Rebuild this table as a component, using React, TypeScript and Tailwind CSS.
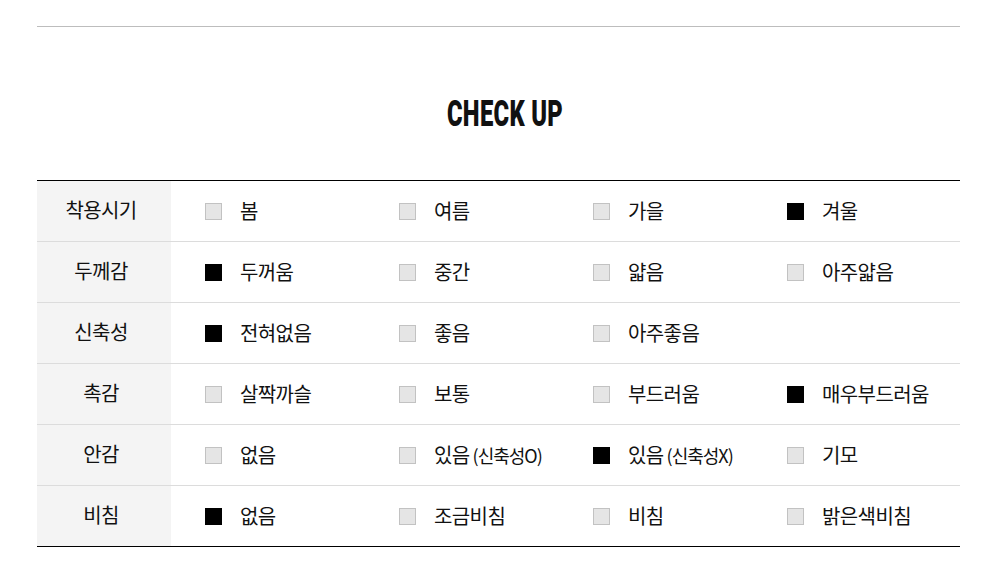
import React from "react";

type Opt = { label: string; sub?: string; on?: boolean };
const rows: { title: string; opts: Opt[] }[] = [
  { title: "착용시기", opts: [{ label: "봄" }, { label: "여름" }, { label: "가을" }, { label: "겨울", on: true }] },
  { title: "두께감", opts: [{ label: "두꺼움", on: true }, { label: "중간" }, { label: "얇음" }, { label: "아주얇음" }] },
  { title: "신축성", opts: [{ label: "전혀없음", on: true }, { label: "좋음" }, { label: "아주좋음" }] },
  { title: "촉감", opts: [{ label: "살짝까슬" }, { label: "보통" }, { label: "부드러움" }, { label: "매우부드러움", on: true }] },
  { title: "안감", opts: [{ label: "없음" }, { label: "있음", sub: "(신축성O)" }, { label: "있음", sub: "(신축성X)", on: true }, { label: "기모" }] },
  { title: "비침", opts: [{ label: "없음", on: true }, { label: "조금비침" }, { label: "비침" }, { label: "밝은색비침" }] },
];

export default function App() {
  return (
    <div
      className="w-[1000px] h-[576px] bg-white text-[#111]"
      style={{ fontFamily: '"Noto Sans CJK KR", "Noto Sans", sans-serif' }}
    >
      <div className="ml-[37px] w-[923px] pt-[26px]">
        <div className="h-px bg-[#bdbdbd]" />
        <div className="flex justify-center pt-[65px] h-[153px] pl-[14px]">
          <span
            className="inline-block scale-x-[0.66] text-[36px] leading-[44px] font-black tracking-[0.5px]"
            style={{ fontFamily: 'Roboto, "Liberation Sans", sans-serif' }}
          >
            CHECK UP
          </span>
        </div>
        <div className="border-t border-b border-black">
          {rows.map((r, i) => (
            <div
              key={r.title}
              className={`flex ${i > 0 ? "h-[61px] border-t border-[#dcdcdc]" : "h-[60px]"}`}
            >
              <div className="w-[134px] shrink-0 bg-[#f4f4f4] flex items-center justify-center text-[20px] tracking-[-0.6px] pr-[6px] pb-[2px]">
                {r.title}
              </div>
              <div className="flex-1 min-w-0 grid grid-cols-[194px_194px_194px_1fr] pl-[34px] items-center">
                {r.opts.map((o, j) => (
                  <div key={j} className="flex items-center gap-[18px]">
                    <span
                      className={`w-[17px] h-[17px] shrink-0 ${
                        o.on ? "bg-black" : "bg-[#e5e5e5] border border-[#c2c2c2]"
                      }`}
                    />
                    <span className="text-[20px] tracking-[-0.6px] whitespace-nowrap leading-[24px] pb-[1px]">
                      {o.label}
                      {o.sub && <span className="text-[18px] tracking-[-1px] ml-[3px]">{o.sub}</span>}
                    </span>
                  </div>
                ))}
              </div>
            </div>
          ))}
        </div>
      </div>
    </div>
  );
}
